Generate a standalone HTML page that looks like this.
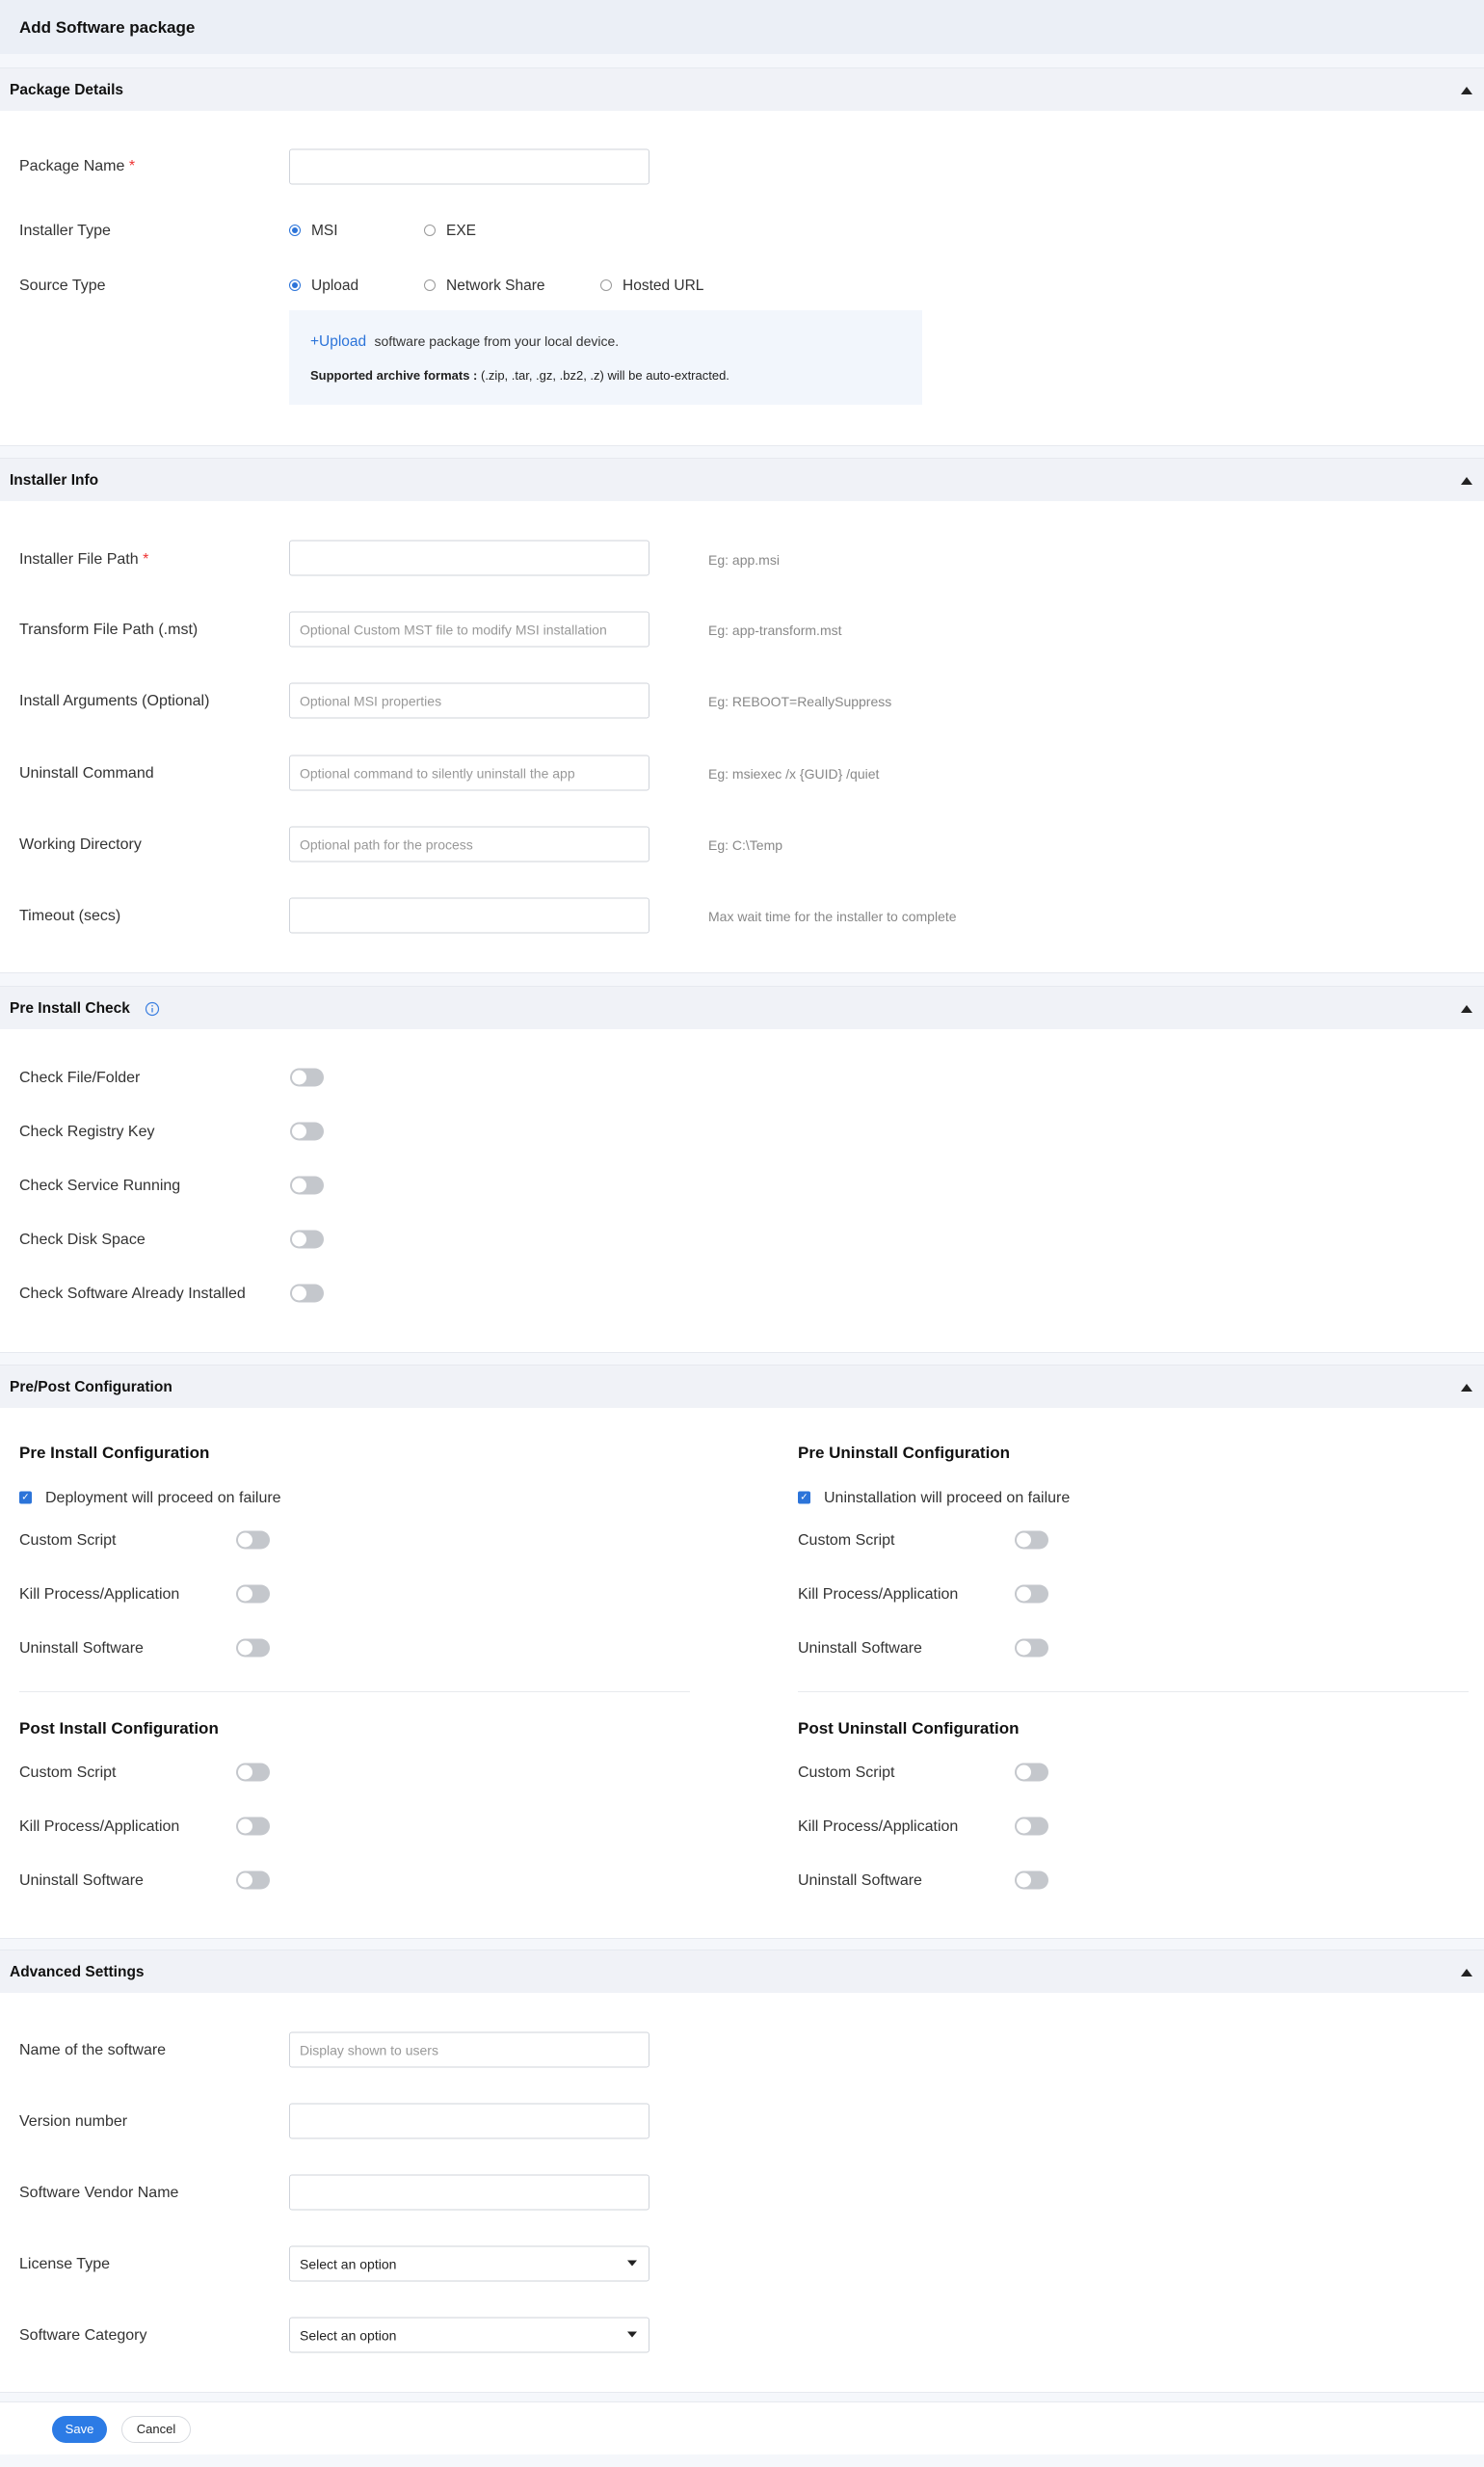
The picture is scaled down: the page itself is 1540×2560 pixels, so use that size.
<!DOCTYPE html>
<html><head><meta charset="utf-8"><style>
*{margin:0;padding:0;box-sizing:border-box}
body{width:1540px;height:2560px;position:relative;background:#f5f7fb;font-family:"Liberation Sans",sans-serif;color:#222;overflow:hidden}
.a{position:absolute}
.white{position:absolute;left:0;width:1540px;background:#fff;border-bottom:1px solid #e6e9ef}
.sh{position:absolute;left:0;width:1540px;height:45px;background:#f0f2f7;border-top:1px solid #e6e9ef}
.sh b{position:absolute;left:10px;top:14px;font-size:15.5px;color:#111}
.sh i{position:absolute;right:12px;top:19px;width:0;height:0;border-left:6px solid transparent;border-right:6px solid transparent;border-bottom:8px solid #222}
.lbl{position:absolute;left:20px;font-size:16px;color:#333;transform:translateY(-45%)}
.inp{position:absolute;left:300px;width:374px;height:37px;border:1px solid #cfd3da;border-radius:3px;background:#fff;transform:translateY(-50%);font-size:14px;color:#999;padding:10px 10px}
.hint{position:absolute;left:735px;font-size:14px;color:#888;transform:translateY(-45%)}
.tg{position:absolute;width:35px;height:19px;border-radius:10px;background:#c4c7cc;transform:translateY(-50%)}
.tg:after{content:"";position:absolute;left:2px;top:2px;width:15px;height:15px;border-radius:50%;background:#fff}
.rad{position:absolute;width:12px;height:12px;border-radius:50%;border:1px solid #999;background:#fff;transform:translateY(-50%)}
.rad.on{border:1px solid #2c74d9}
.rad.on:after{content:"";position:absolute;left:2px;top:2px;width:6px;height:6px;border-radius:50%;background:#2c74d9}
.rt{position:absolute;font-size:15.5px;color:#333;transform:translateY(-45%)}
.cbt{font-size:16px}
.h3{position:absolute;font-size:17px;font-weight:bold;color:#111;transform:translateY(-45%)}
.cb{position:absolute;width:13px;height:13px;background:#2c74d9;border-radius:2px;transform:translateY(-50%);color:#fff;font-size:10px;line-height:13px;text-align:center}
.sel:after{content:"";position:absolute;right:12px;top:14px;border-left:5px solid transparent;border-right:5px solid transparent;border-top:6px solid #222}
</style></head><body>
<div class="a" style="left:0;top:0;width:1540px;height:56px;background:#ebeff6"></div>
<div class="a" style="left:20px;top:19px;font-size:17px;font-weight:bold;color:#111">Add Software package</div>

<div class="white" style="top:70px;height:393px"></div>
<div class="sh" style="top:70px"><b>Package Details</b><i></i></div>
<div class="lbl" style="top:172px">Package Name <span style="color:#e33">*</span></div>
<div class="inp" style="top:173px"></div>
<div class="lbl" style="top:239px">Installer Type</div>
<div class="rad on" style="left:300px;top:239px"></div><div class="rt" style="left:323px;top:239px">MSI</div>
<div class="rad" style="left:440px;top:239px"></div><div class="rt" style="left:463px;top:239px">EXE</div>
<div class="lbl" style="top:296px">Source Type</div>
<div class="rad on" style="left:300px;top:296px"></div><div class="rt" style="left:323px;top:296px">Upload</div>
<div class="rad" style="left:440px;top:296px"></div><div class="rt" style="left:463px;top:296px">Network Share</div>
<div class="rad" style="left:623px;top:296px"></div><div class="rt" style="left:646px;top:296px">Hosted URL</div>
<div class="a" style="left:300px;top:322px;width:657px;height:98px;background:#f2f6fc"></div>
<div class="a" style="left:322px;top:346px;font-size:15.5px;color:#2c74d9">+Upload <span style="color:#333;font-size:14px;margin-left:4px">software package from your local device.</span></div>
<div class="a" style="left:322px;top:382px;font-size:13px;color:#222"><b>Supported archive formats :</b> (.zip, .tar, .gz, .bz2, .z) will be auto-extracted.</div>

<div class="white" style="top:475px;height:535px"></div>
<div class="sh" style="top:475px"><b>Installer Info</b><i></i></div>
<div class="lbl" style="top:580px">Installer File Path <span style="color:#e33">*</span></div><div class="inp" style="top:579px"></div><div class="hint" style="top:580px">Eg: app.msi</div>
<div class="lbl" style="top:653px">Transform File Path (.mst)</div><div class="inp" style="top:653px">Optional Custom MST file to modify MSI installation</div><div class="hint" style="top:653px">Eg: app-transform.mst</div>
<div class="lbl" style="top:727px">Install Arguments (Optional)</div><div class="inp" style="top:727px">Optional MSI properties</div><div class="hint" style="top:727px">Eg: REBOOT=ReallySuppress</div>
<div class="lbl" style="top:802px">Uninstall Command</div><div class="inp" style="top:802px">Optional command to silently uninstall the app</div><div class="hint" style="top:802px">Eg: msiexec /x {GUID} /quiet</div>
<div class="lbl" style="top:876px">Working Directory</div><div class="inp" style="top:876px">Optional path for the process</div><div class="hint" style="top:876px">Eg: C:\Temp</div>
<div class="lbl" style="top:950px">Timeout (secs)</div><div class="inp" style="top:950px"></div><div class="hint" style="top:950px">Max wait time for the installer to complete</div>

<div class="white" style="top:1023px;height:381px"></div>
<div class="sh" style="top:1023px"><b>Pre Install Check</b><i></i>
<svg class="a" style="left:150px;top:15px" width="16" height="16" viewBox="0 0 16 16"><circle cx="8" cy="8" r="6.5" fill="none" stroke="#3b7fe0" stroke-width="1.2"/><line x1="8" y1="7" x2="8" y2="11.5" stroke="#3b7fe0" stroke-width="1.3"/><circle cx="8" cy="4.8" r="0.8" fill="#3b7fe0"/></svg></div>
<div class="lbl" style="top:1118px">Check File/Folder</div><div class="tg" style="left:301px;top:1118px"></div>
<div class="lbl" style="top:1174px">Check Registry Key</div><div class="tg" style="left:301px;top:1174px"></div>
<div class="lbl" style="top:1230px">Check Service Running</div><div class="tg" style="left:301px;top:1230px"></div>
<div class="lbl" style="top:1286px">Check Disk Space</div><div class="tg" style="left:301px;top:1286px"></div>
<div class="lbl" style="top:1342px">Check Software Already Installed</div><div class="tg" style="left:301px;top:1342px"></div>

<div class="white" style="top:1416px;height:596px"></div>
<div class="sh" style="top:1416px"><b>Pre/Post Configuration</b><i></i></div>
<div class="h3" style="left:20px;top:1507px">Pre Install Configuration</div>
<div class="h3" style="left:828px;top:1507px">Pre Uninstall Configuration</div>
<div class="cb" style="left:20px;top:1554px">✓</div><div class="rt cbt" style="left:47px;top:1554px">Deployment will proceed on failure</div>
<div class="cb" style="left:828px;top:1554px">✓</div><div class="rt cbt" style="left:855px;top:1554px">Uninstallation will proceed on failure</div>
<div class="lbl" style="top:1598px">Custom Script</div><div class="tg" style="left:245px;top:1598px"></div>
<div class="lbl" style="top:1654px">Kill Process/Application</div><div class="tg" style="left:245px;top:1654px"></div>
<div class="lbl" style="top:1710px">Uninstall Software</div><div class="tg" style="left:245px;top:1710px"></div>
<div class="lbl" style="left:828px;top:1598px">Custom Script</div><div class="tg" style="left:1053px;top:1598px"></div>
<div class="lbl" style="left:828px;top:1654px">Kill Process/Application</div><div class="tg" style="left:1053px;top:1654px"></div>
<div class="lbl" style="left:828px;top:1710px">Uninstall Software</div><div class="tg" style="left:1053px;top:1710px"></div>
<div class="a" style="left:20px;top:1755px;width:696px;height:1px;background:#e8eaee"></div>
<div class="a" style="left:828px;top:1755px;width:696px;height:1px;background:#e8eaee"></div>
<div class="h3" style="left:20px;top:1793px">Post Install Configuration</div>
<div class="h3" style="left:828px;top:1793px">Post Uninstall Configuration</div>
<div class="lbl" style="top:1839px">Custom Script</div><div class="tg" style="left:245px;top:1839px"></div>
<div class="lbl" style="top:1895px">Kill Process/Application</div><div class="tg" style="left:245px;top:1895px"></div>
<div class="lbl" style="top:1951px">Uninstall Software</div><div class="tg" style="left:245px;top:1951px"></div>
<div class="lbl" style="left:828px;top:1839px">Custom Script</div><div class="tg" style="left:1053px;top:1839px"></div>
<div class="lbl" style="left:828px;top:1895px">Kill Process/Application</div><div class="tg" style="left:1053px;top:1895px"></div>
<div class="lbl" style="left:828px;top:1951px">Uninstall Software</div><div class="tg" style="left:1053px;top:1951px"></div>

<div class="white" style="top:2023px;height:460px"></div>
<div class="sh" style="top:2023px"><b>Advanced Settings</b><i></i></div>
<div class="lbl" style="top:2127px">Name of the software</div><div class="inp" style="top:2127px">Display shown to users</div>
<div class="lbl" style="top:2201px">Version number</div><div class="inp" style="top:2201px"></div>
<div class="lbl" style="top:2275px">Software Vendor Name</div><div class="inp" style="top:2275px"></div>
<div class="lbl" style="top:2349px">License Type</div><div class="inp sel" style="top:2349px;color:#222">Select an option</div>
<div class="lbl" style="top:2423px">Software Category</div><div class="inp sel" style="top:2423px;color:#222">Select an option</div>

<div class="a" style="left:0;top:2492px;width:1540px;height:55px;background:#fff;border-top:1px solid #e6e9ef"></div>
<div class="a" style="left:54px;top:2507px;width:57px;height:28px;border-radius:14px;background:#2c7be5;color:#fff;font-size:13px;text-align:center;line-height:28px">Save</div>
<div class="a" style="left:126px;top:2507px;width:72px;height:28px;border-radius:14px;background:#fff;border:1px solid #d8dbe0;color:#222;font-size:13px;text-align:center;line-height:26px">Cancel</div>
</body></html>
